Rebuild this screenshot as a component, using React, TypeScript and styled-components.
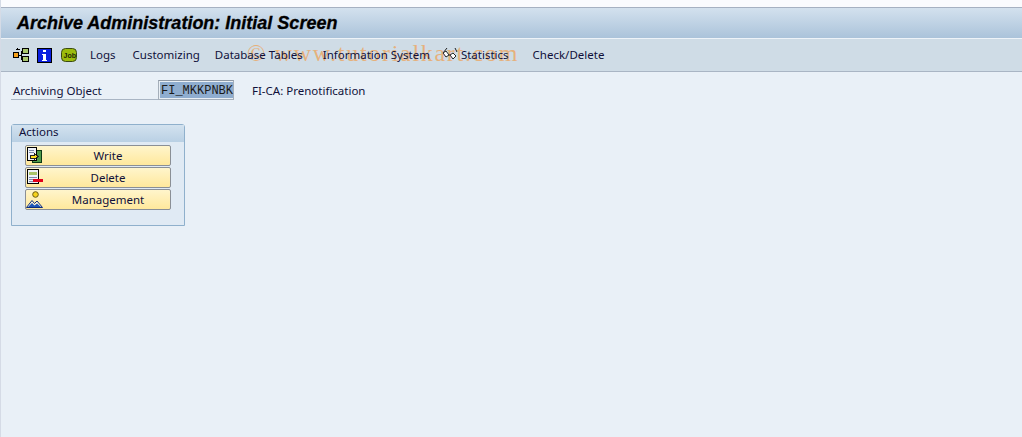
import React from "react";
import styled, { createGlobalStyle } from "styled-components";

const GlobalStyle = createGlobalStyle`
  html, body {
    margin: 0;
    padding: 0;
    background: #e9f0f7;
  }
  body {
    font-family: "Noto Sans", sans-serif;
    font-size: 11.5px;
    color: #10103a;
    overflow: hidden;
  }
`;

const Screen = styled.div`
  width: 1022px;
  height: 437px;
  display: flex;
  flex-direction: column;
  position: relative;
  overflow: hidden;
  box-sizing: border-box;
  border-left: 1px solid #d5dbe6;
`;

const TopStrip = styled.div`
  height: 7px;
  background: #fafbfe;
`;

const TitleBar = styled.div`
  height: 31px;
  box-sizing: border-box;
  border-top: 1px solid #a6b1c2;
  background: linear-gradient(#d3e1ee, #abc3da);
  padding-left: 16px;
  display: flex;
  align-items: center;
`;

const Title = styled.h1`
  margin: 0;
  font-family: "Liberation Sans", sans-serif;
  font-size: 18px;
  font-weight: 700;
  font-style: italic;
  color: #000;
  -webkit-text-stroke: 0.3px #000;
`;

const Toolbar = styled.div`
  height: 34px;
  box-sizing: border-box;
  border-top: 1px solid #eef3f8;
  border-bottom: 1px solid #a9b5c4;
  background: #cfdce6;
  padding-left: 12px;
  display: flex;
  align-items: center;
`;

const IconGroup = styled.div`
  display: flex;
  align-items: center;
  gap: 8px;
  margin-right: 13px;
`;

const ToolItem = styled.span<{ $after: number }>`
  position: relative;
  z-index: 1;
  margin-right: ${(p) => p.$after}px;
  padding-bottom: 2px;
  white-space: nowrap;
  display: flex;
  align-items: center;
  gap: 3px;
`;

const Watermark = styled.div`
  position: absolute;
  left: 246px;
  top: 40px;
  font-family: "Liberation Serif", serif;
  font-size: 24px;
  letter-spacing: 1.7px;
  color: #e6b17c;
  white-space: nowrap;
  pointer-events: none;
`;

const Content = styled.main`
  flex: 1;
  padding: 8px 10px;
  display: flex;
  flex-direction: column;
`;

const FieldRow = styled.div`
  display: flex;
  align-items: center;
  height: 20px;
`;

const FieldLabel = styled.label`
  width: 147px;
  height: 20px;
  box-sizing: border-box;
  border-bottom: 1px solid #a9b5c4;
  padding-left: 2px;
  line-height: 21px;
`;

const FieldValue = styled.div`
  width: 76px;
  height: 20px;
  box-sizing: border-box;
  border: 1px solid #a5afba;
  border-top-color: #8f99a6;
  background: #e9eff5;
  padding: 1px;
  display: flex;
`;

const Selected = styled.span`
  flex: 1;
  background: #8fadcf;
  color: #1a1a1a;
  font-family: "Liberation Mono", monospace;
  font-size: 12px;
  line-height: 16px;
  padding: 1px 0 0 1px;
`;

const FieldText = styled.span`
  margin-left: 18px;
`;

const Panel = styled.section`
  margin-top: 24px;
  width: 174px;
  height: 102px;
  box-sizing: border-box;
  border: 1px solid #8fb0cc;
  border-radius: 3px 3px 0 0;
  background: #e0eaf4;
`;

const PanelHeader = styled.div`
  height: 17px;
  padding-left: 7px;
  line-height: 14px;
  background: linear-gradient(#d3e2ef, #b9d0e4);
`;

const ButtonStack = styled.div`
  padding: 3px 0 0 13px;
  display: flex;
  flex-direction: column;
  gap: 1px;
`;

const ActionButton = styled.button`
  width: 146px;
  height: 21px;
  padding: 0;
  box-sizing: border-box;
  border: 1px solid #8a8f96;
  border-radius: 2px;
  background: linear-gradient(#fff5cc, #ffe89c);
  display: flex;
  align-items: center;
  color: #10103a;
  font-family: inherit;
  font-size: 11.5px;
`;

const ButtonIcon = styled.span`
  width: 17px;
  height: 17px;
  flex: none;
  display: block;
`;

const ButtonText = styled.span`
  flex: 1;
  text-align: center;
  padding-left: 3px;
`;

const Glyph = styled.svg`
  display: block;
  flex: none;
  shape-rendering: crispEdges;
`;

const SmoothGlyph = styled.svg`
  display: block;
  flex: none;
`;

const JobLabel = styled.text`
  font-family: "Liberation Sans", sans-serif;
  font-size: 7px;
  font-weight: 700;
  fill: #1d2a04;
`;

const HierarchyIcon = () => (
  <Glyph width="16" height="16" viewBox="0 0 16 16">
    <path d="M3 2h4M4 1v2" stroke="#000" fill="none" />
    <rect x="0.5" y="5.5" width="5" height="5" fill="#f7a21b" stroke="#000" />
    <rect x="9.5" y="1.5" width="6" height="5" fill="#a8c66c" stroke="#000" />
    <rect x="9.5" y="9.5" width="6" height="5" fill="#a8c66c" stroke="#000" />
    <path d="M6 8h2M8 4v8M8 4h1M8 12h1" stroke="#000" fill="none" />
  </Glyph>
);

const InfoIcon = () => (
  <Glyph width="15" height="15" viewBox="0 0 15 15">
    <rect x="0.5" y="0.5" width="14" height="14" fill="#0a1fe0" stroke="#000" />
    <path d="M6 2h3v2H6zM5 6h4v6h1v1H5v-1h1V7H5z" fill="#fff" />
  </Glyph>
);

const JobIcon = () => (
  <SmoothGlyph width="17" height="14" viewBox="0 0 17 14">
    <rect x="1.5" y="0.5" width="15" height="13" rx="4" fill="#9cbc0c" stroke="#3a4a10" />
    <JobLabel x="3.5" y="9.5">Job</JobLabel>
  </SmoothGlyph>
);

const GlassesIcon = () => (
  <SmoothGlyph width="16" height="14" viewBox="0 0 16 14">
    <path d="M5 1L1 6M13 1l2 4" stroke="#222" fill="none" />
    <path d="M1 6l3-2 3 4-3 2zM8 8l3-2 3 3-3 3z" fill="#fff" stroke="#222" />
    <path d="M7 8l1 0" stroke="#222" />
  </SmoothGlyph>
);

const WriteIcon = () => (
  <Glyph width="17" height="17" viewBox="0 0 17 17">
    <rect x="6.5" y="3.5" width="9" height="12" fill="#4f9a4a" stroke="#0c3a14" />
    <rect x="1.5" y="0.5" width="9" height="13" fill="#eef2fa" stroke="#000" />
    <path d="M3 3h5M3 5h5" stroke="#7b8aa8" />
    <path d="M4 8h4V6l4 3.5L8 13v-2H4z" fill="#ffe020" stroke="#222" />
  </Glyph>
);

const DeleteIcon = () => (
  <Glyph width="17" height="17" viewBox="0 0 17 17">
    <rect x="1.5" y="0.5" width="11" height="14" fill="#eef2fa" stroke="#000" />
    <rect x="3" y="3" width="8" height="3" fill="#a9c46a" />
    <path d="M3 8h8M3 10h6M3 12h6" stroke="#7b8aa8" />
    <rect x="7" y="10" width="10" height="3" fill="#e2001a" />
  </Glyph>
);

const ManagementIcon = () => (
  <SmoothGlyph width="17" height="17" viewBox="0 0 17 17">
    <circle cx="9.5" cy="3.5" r="2.8" fill="#f6d21c" stroke="#6a5a10" />
    <path d="M0.5 16.5L6 9.5 8.5 12.5 11 10l5.5 6.5z" fill="#fff6d8" stroke="#0c2a7c" strokeWidth="1" />
    <path d="M2 16l4-4 2.5 2.5L11 12.5l4 3.5z" fill="#1f56b8" />
  </SmoothGlyph>
);

const actions = [
  { label: "Write", icon: <WriteIcon /> },
  { label: "Delete", icon: <DeleteIcon /> },
  { label: "Management", icon: <ManagementIcon /> },
];

const App: React.FC = () => {
  return (
    <Screen>
      <GlobalStyle />
      <TopStrip />
      <TitleBar>
        <Title>Archive Administration: Initial Screen</Title>
      </TitleBar>
      <Toolbar>
        <IconGroup>
          <HierarchyIcon />
          <InfoIcon />
          <JobIcon />
        </IconGroup>
        <ToolItem $after={17}>Logs</ToolItem>
        <ToolItem $after={15}>Customizing</ToolItem>
        <ToolItem $after={20}>Database Tables</ToolItem>
        <ToolItem $after={12}>Information System</ToolItem>
        <ToolItem $after={24}>
          <GlassesIcon />
          Statistics
        </ToolItem>
        <ToolItem $after={0}>Check/Delete</ToolItem>
      </Toolbar>
      <Watermark>© www.tutorialkart.com</Watermark>
      <Content>
        <FieldRow>
          <FieldLabel>Archiving Object</FieldLabel>
          <FieldValue>
            <Selected>FI_MKKPNBK</Selected>
          </FieldValue>
          <FieldText>FI-CA: Prenotification</FieldText>
        </FieldRow>
        <Panel>
          <PanelHeader>Actions</PanelHeader>
          <ButtonStack>
            {actions.map((action) => (
              <ActionButton key={action.label} type="button">
                <ButtonIcon>{action.icon}</ButtonIcon>
                <ButtonText>{action.label}</ButtonText>
              </ActionButton>
            ))}
          </ButtonStack>
        </Panel>
      </Content>
    </Screen>
  );
};

export default App;
